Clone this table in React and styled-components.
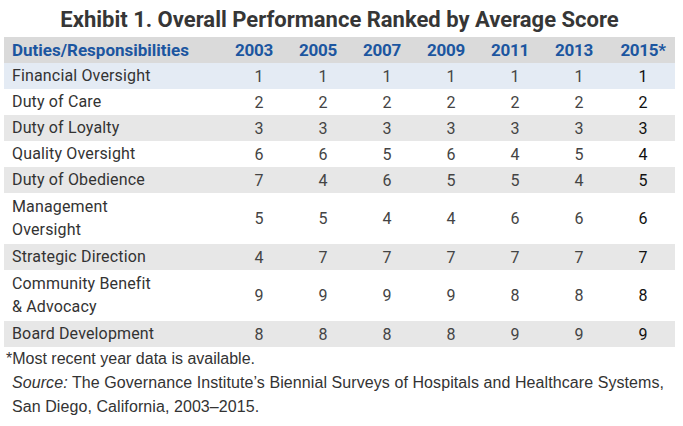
import React from "react"
import styled, { createGlobalStyle } from "styled-components"

const GlobalStyle = createGlobalStyle`
  body {
    margin: 0;
    background: #ffffff;
    font-family: Roboto, "Liberation Sans", sans-serif;
  }
`

const Page = styled.div`
  width: 683px;
  height: 426px;
  padding: 0 8px 0 4px;
  box-sizing: border-box;
  color: #333333;
`

const Title = styled.h1`
  margin: 0;
  padding-top: 6px;
  height: 37px;
  box-sizing: border-box;
  text-align: center;
  font-family: Roboto, "Liberation Sans", sans-serif;
  font-size: 22px;
  line-height: 28px;
  font-weight: 700;
  color: #363636;
`

const Table = styled.div`
  display: grid;
  grid-template-columns: 223px repeat(7, 64px);
`

const Row = styled.div`
  display: contents;
  & > div {
    background: ${(p) => p.$bg};
    min-height: 26px;
  }
`

const Label = styled.div`
  display: flex;
  align-items: center;
  padding: ${(p) => (p.$tall ? "2px 8px 3px" : "0 8px")};
  font-size: 16px;
  letter-spacing: 0.15px;
  line-height: ${(p) => (p.$tall ? "23px" : "26px")};
  color: #333333;
`

const HeadLabel = styled.div`
  display: flex;
  align-items: center;
  padding: 0 8px;
  font-weight: 700;
  font-size: 17px;
  color: #1c56a0;
`

const HeadCell = styled(HeadLabel)`
  justify-content: center;
  letter-spacing: -0.3px;
  padding: 0 ${(p) => (p.$last ? "0" : "10px")} 0 0;
`

const Cell = styled.div`
  display: flex;
  align-items: center;
  justify-content: center;
  font-size: 16px;
  color: ${(p) => (p.$last ? "#111111" : "#444444")};
`

const Notes = styled.div`
  padding: 0 0 0 2px;
  font-family: "Liberation Sans", Arial, sans-serif;
  font-size: 16px;
  line-height: 24px;
  color: #333333;
`

const Note = styled.p`
  margin: 0;
  padding-left: ${(p) => p.$indent || 0}px;
  letter-spacing: ${(p) => (p.$indent ? "0.08px" : "0")};
  em {
    font-style: italic;
  }
`

const years = ["2003", "2005", "2007", "2009", "2011", "2013", "2015*"]

const rows = [
  { label: ["Financial Oversight"], values: [1, 1, 1, 1, 1, 1, 1], bg: "#e4ebf4" },
  { label: ["Duty of Care"], values: [2, 2, 2, 2, 2, 2, 2], bg: "#ffffff" },
  { label: ["Duty of Loyalty"], values: [3, 3, 3, 3, 3, 3, 3], bg: "#e7e7e7" },
  { label: ["Quality Oversight"], values: [6, 6, 5, 6, 4, 5, 4], bg: "#ffffff" },
  { label: ["Duty of Obedience"], values: [7, 4, 6, 5, 5, 4, 5], bg: "#e7e7e7" },
  { label: ["Management", "Oversight"], values: [5, 5, 4, 4, 6, 6, 6], bg: "#ffffff" },
  { label: ["Strategic Direction"], values: [4, 7, 7, 7, 7, 7, 7], bg: "#e7e7e7" },
  { label: ["Community Benefit", "& Advocacy"], values: [9, 9, 9, 9, 8, 8, 8], bg: "#ffffff" },
  { label: ["Board Development"], values: [8, 8, 8, 8, 9, 9, 9], bg: "#e7e7e7" },
]

const App = () => {
  return (
    <Page>
      <GlobalStyle />
      <Title>Exhibit 1. Overall Performance Ranked by Average Score</Title>
      <Table>
        <Row $bg="#dadada">
          <HeadLabel>Duties/Responsibilities</HeadLabel>
          {years.map((y, i) => (
            <HeadCell key={y} $last={i === years.length - 1}>
              {y}
            </HeadCell>
          ))}
        </Row>
        {rows.map((r) => (
          <Row key={r.label.join(" ")} $bg={r.bg}>
            <Label $tall={r.label.length > 1}>
              <span>
                {r.label.map((l, i) => (
                  <React.Fragment key={l}>
                    {i > 0 && <br />}
                    {l}
                  </React.Fragment>
                ))}
              </span>
            </Label>
            {r.values.map((v, i) => (
              <Cell key={i} $last={i === r.values.length - 1}>
                {v}
              </Cell>
            ))}
          </Row>
        ))}
      </Table>
      <Notes>
        <Note>*Most recent year data is available.</Note>
        <Note $indent={6}>
          <em>Source:</em> The Governance Institute’s Biennial Surveys of Hospitals and Healthcare Systems,
        </Note>
        <Note $indent={6}>San Diego, California, 2003–2015.</Note>
      </Notes>
    </Page>
  )
}

export default App
